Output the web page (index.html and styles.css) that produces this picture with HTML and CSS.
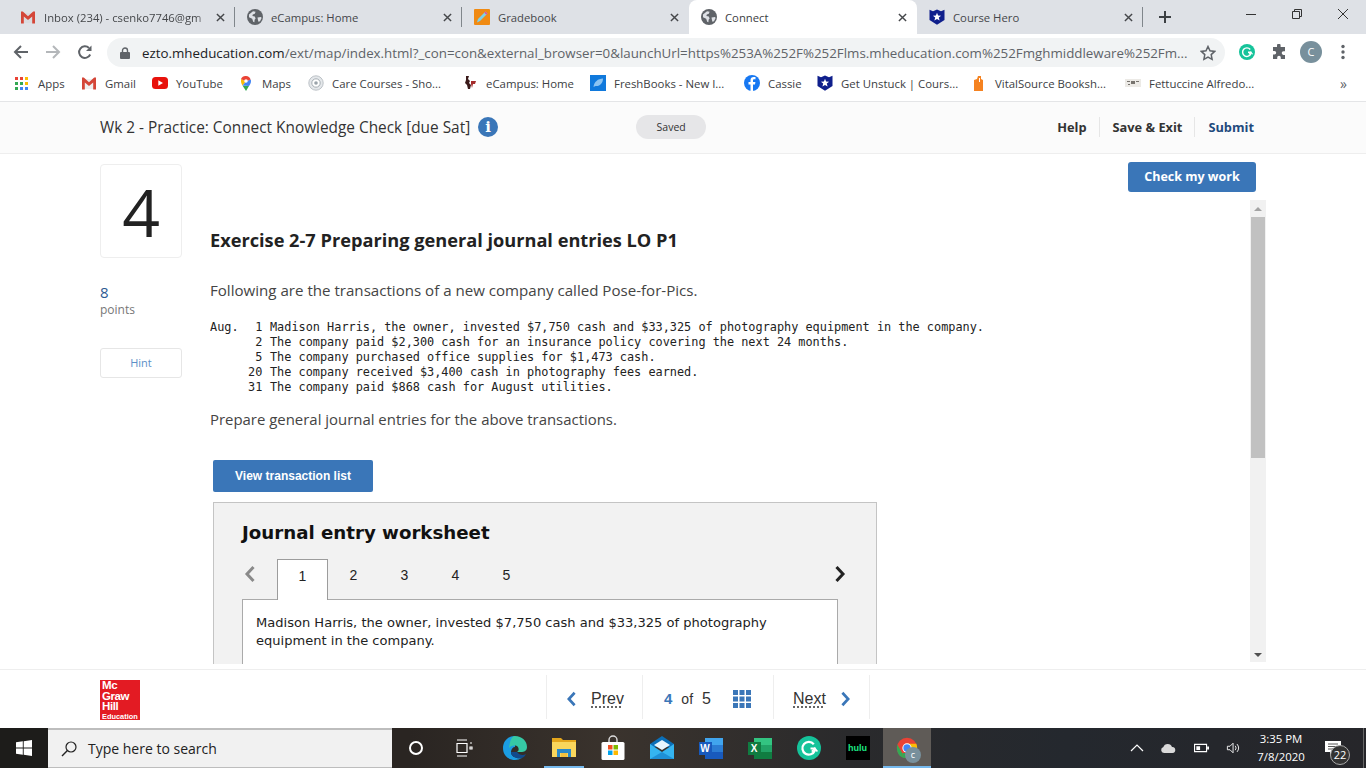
FILE: index.html
```html
<!DOCTYPE html>
<html lang="en">
<head>
<meta charset="utf-8">
<title>Connect</title>
<link rel="stylesheet" href="styles.css">
</head>
<body>
<svg class="defs" aria-hidden="true">
  <symbol id="globe" viewBox="0 0 16 16"><circle cx="8" cy="8" r="8" fill="#5f6368"/><path fill="#dee1e6" d="M2 5.500 6 2.200l2.600.6-.8 2-2 .6-.4 1.600 2.400.6.8 1.800-1 1.400-.2 2.400-1.200-.4-1-3L2 8.200zM10.500 8.500l3.500-.5.600 1-1.600 3.200-1.600.6-.6-2.600z"/></symbol>
  <symbol id="gmail" viewBox="0 0 16 16"><path fill="#d2d2d2" d="M3 4h10v10H3z" opacity=".35"/><path fill="#d44638" d="M1 2.500h1.800L8 7.300l5.200-4.800H15V14.500h-2.800V7.400L8 11 3.800 7.400v7.100H1z"/></symbol>
  <symbol id="hero" viewBox="0 0 16 16"><path fill="#0f1f8c" d="M.5 .8 4 2.200 8 .5l4 1.700L15.500 .8V11L8 15.800 .5 11z"/><path fill="#fff" d="m8 3.800 1.100 2.800 3 .1-2.300 1.900.8 2.900L8 9.900l-2.600 1.600.8-2.900-2.300-1.900 3-.1z"/></symbol>
  <symbol id="close" viewBox="0 0 10 10"><path d="m1 1 8 8M9 1 1 9" fill="none" stroke="#45474a" stroke-width="1.600"/></symbol>
  <symbol id="chev-l" viewBox="0 0 12 18"><path d="M9.500 2 3 9l6.500 7" fill="none" stroke="currentColor" stroke-width="3"/></symbol>
  <symbol id="chev-r" viewBox="0 0 12 18"><path d="M2.500 2 9 9l-6.500 7" fill="none" stroke="currentColor" stroke-width="3"/></symbol>
  <symbol id="grammarly" viewBox="0 0 24 24"><circle cx="12" cy="12" r="12" fill="#15c39a"/><path d="M16.800 8.200A6.400 6.400 0 1 0 17.800 14.500l-.3-2h-4" fill="none" stroke="#fff" stroke-width="2.200"/><path d="m14.800 15.600 3-3.400 2.600 3.200" fill="none" stroke="#fff" stroke-width="1.600"/></symbol>
</svg>

<div class="tabstrip">
  <div class="tab sep">
    <svg class="ico16"><use href="#gmail"/></svg>
    <span class="tab-title fade">Inbox (234) - csenko7746@gm</span>
    <svg class="tab-x"><use href="#close"/></svg>
  </div>
  <div class="tab sep">
    <svg class="ico16"><use href="#globe"/></svg>
    <span class="tab-title">eCampus: Home</span>
    <svg class="tab-x"><use href="#close"/></svg>
  </div>
  <div class="tab">
    <svg class="ico16" viewBox="0 0 16 16"><rect width="16" height="16" rx="1" fill="#f08a12"/><path d="M3 13.500 4 10l7.500-7.500 2 2L6 12z" fill="#7fd0e8"/><path d="m11.500 2.500 2 2-1.200 1.200-2-2z" fill="#e0559c"/></svg>
    <span class="tab-title">Gradebook</span>
    <svg class="tab-x"><use href="#close"/></svg>
  </div>
  <div class="tab tab-active">
    <svg class="ico16"><use href="#globe"/></svg>
    <span class="tab-title">Connect</span>
    <svg class="tab-x"><use href="#close"/></svg>
  </div>
  <div class="tab tab-last sep">
    <svg class="ico16"><use href="#hero"/></svg>
    <span class="tab-title">Course Hero</span>
    <svg class="tab-x"><use href="#close"/></svg>
  </div>
  <svg class="newtab" viewBox="0 0 12 12"><path d="M6 0v12M0 6h12" fill="none" stroke="#3c4043" stroke-width="2"/></svg>
  <div class="winctl">
    <svg class="winbtn" viewBox="0 0 12 12"><path d="M1 6.500h10" stroke="#333" fill="none"/></svg>
    <svg class="winbtn" viewBox="0 0 12 12"><path d="M1.500 3.500h7v7h-7zM3.500 3.500v-2h7v7h-2" stroke="#333" fill="none"/></svg>
    <svg class="winbtn" viewBox="0 0 12 12"><path d="m1 1 10 10M11 1 1 11" stroke="#333" fill="none"/></svg>
  </div>
</div>

<div class="toolbar">
  <svg class="tool" viewBox="0 0 16 16"><path d="M15 8H2M8 2 2 8l6 6" fill="none" stroke="#5f6368" stroke-width="2"/></svg>
  <svg class="tool" viewBox="0 0 16 16"><path d="M1 8h13M8 2l6 6-6 6" fill="none" stroke="#b4b7ba" stroke-width="2"/></svg>
  <svg class="tool" viewBox="0 0 16 16"><path d="M13.200 10.500A5.800 5.800 0 1 1 12 4" fill="none" stroke="#5f6368" stroke-width="2"/><path d="M14.500 1.500v5.500H9z" fill="#5f6368"/></svg>
  <div class="omnibox">
    <svg class="lock" viewBox="0 0 10 12"><path d="M2.500 5V3.500a2.500 2.500 0 0 1 5 0V5" fill="none" stroke="#5f6368" stroke-width="1.400"/><rect y="5" width="10" height="7" rx="1" fill="#5f6368"/></svg>
    <span class="url"><b>ezto.mheducation.com</b>/ext/map/index.html?_con=con&amp;external_browser=0&amp;launchUrl=https%253A%252F%252Flms.mheducation.com%252Fmghmiddleware%252Fm...</span>
    <svg class="star" viewBox="0 0 16 16"><path d="m8 1.500 2 4.300 4.700.6-3.500 3.200.9 4.700L8 12l-4.100 2.300.9-4.700L1.300 6.400 6 5.800z" fill="none" stroke="#5f6368" stroke-width="1.500"/></svg>
  </div>
  <div class="ext">
    <svg class="ico16"><use href="#grammarly"/></svg>
    <svg class="puzzle" viewBox="0 0 16 16"><path fill="#5f6368" d="M6 1.500a1.800 1.800 0 0 1 3.600 0V3H14v4.300h-1.500a1.800 1.800 0 0 0 0 3.600H14V15H9.800v-1.500a1.800 1.800 0 0 0-3.600 0V15H2v-4.400h1.400a1.800 1.800 0 0 0 0-3.600H2V3h4z"/></svg>
    <span class="avatar">C</span>
    <svg class="kebab" viewBox="0 0 4 16"><circle cx="2" cy="2.500" r="1.700" fill="#5f6368"/><circle cx="2" cy="8" r="1.700" fill="#5f6368"/><circle cx="2" cy="13.500" r="1.700" fill="#5f6368"/></svg>
  </div>
</div>

<div class="bookmarks">
  <div class="bm"><svg class="ico14" viewBox="0 0 13 13"><path fill="#ea4335" d="M0 0h3v3H0zM5 0h3v3H5z"/><path fill="#fbbc05" d="M10 0h3v3h-3zM10 5h3v3h-3z"/><path fill="#34a853" d="M0 5h3v3H0zM5 5h3v3H5zM0 10h3v3H0z"/><path fill="#4285f4" d="M5 10h3v3H5zM10 10h3v3h-3z"/></svg><span>Apps</span></div>
  <div class="bm"><svg class="ico16"><use href="#gmail"/></svg><span>Gmail</span></div>
  <div class="bm"><svg class="ico16" viewBox="0 0 16 16"><rect y="2" width="16" height="12" rx="3.500" fill="#e8120c"/><path d="m6.300 5.200 4.700 2.800-4.700 2.800z" fill="#fff"/></svg><span>YouTube</span></div>
  <div class="bm"><svg class="ico16" viewBox="0 0 16 16"><path fill="#34a853" d="M4.500 10.500 8 16l3-5z"/><path fill="#fbbc05" d="M3 4v2.500c0 1.500 1 3 1.500 4L8 6.500z"/><path fill="#4285f4" d="M8 6.500 4.500 10.500 11 11c1-1.500 2-3 2-4.800 0-.7-.1-1.200-.4-1.700z"/><path fill="#ea4335" d="M3 4 8 6.500l4.600-2A5 5 0 0 0 8 1a5 5 0 0 0-5 3z"/><circle cx="8" cy="6" r="1.800" fill="#fff"/></svg><span>Maps</span></div>
  <div class="bm"><svg class="ico16" viewBox="0 0 16 16"><circle cx="8" cy="8" r="7.200" fill="#e4e7ea" stroke="#bcc2c7"/><circle cx="8" cy="8" r="4.200" fill="#fff" stroke="#a5adb3"/><circle cx="8" cy="8" r="1.800" fill="#9aa3aa"/></svg><span>Care Courses - Sho...</span></div>
  <div class="bm"><svg class="ico16" viewBox="0 0 16 16"><path fill="#3a1a1a" d="M4 1h3l-1 3 2 2-1 2 2 2-1 4H6L5 10 3 8l1-3z"/><path fill="#a42b2b" d="M9 6h5l-1 3h-2l-1 4-1-4z"/></svg><span>eCampus: Home</span></div>
  <div class="bm"><svg class="ico16" viewBox="0 0 16 16"><rect width="16" height="16" fill="#1079dc"/><path d="M3.500 12C4 7 8 3.500 13 3.500c0 4.500-3 8-7.500 7.500z" fill="#8cc4f2"/></svg><span>FreshBooks - New I...</span></div>
  <div class="bm"><svg class="ico16" viewBox="0 0 16 16"><circle cx="8" cy="8" r="8" fill="#1778f2"/><path d="M9 16V9.500h2l.4-2.500H9V5.500c0-.8.3-1.300 1.300-1.300h1.200V2.100C11 2 10.300 2 9.700 2 7.700 2 6.500 3.200 6.500 5.200V7h-2v2.500h2V16z" fill="#fff"/></svg><span>Cassie</span></div>
  <div class="bm"><svg class="ico16"><use href="#hero"/></svg><span>Get Unstuck | Cours...</span></div>
  <div class="bm"><svg class="ico16" viewBox="0 0 16 16"><path fill="#f58220" d="M3 5 6 4l1-3h3v3l2 1v11H3z"/><path fill="#fff" d="M8 3h1v4H8z"/></svg><span>VitalSource Booksh...</span></div>
  <div class="bm"><svg class="ico16" viewBox="0 0 16 16"><rect y="4" width="16" height="8" fill="#eceae6"/><path fill="#77736e" d="M2 6h3v1H2zM6 6h4v3H6zM11 6h3v1h-3zM3 9h2v1H3z"/></svg><span>Fettuccine Alfredo...</span></div>
  <div class="bm-more">»</div>
</div>

<header class="quiz-head">
  <div class="quiz-title">Wk 2 - Practice: Connect Knowledge Check [due Sat]</div>
  <span class="info">i</span>
  <span class="saved">Saved</span>
  <nav class="quiz-links">
    <span class="qlink">Help</span>
    <span class="qlink">Save &amp; Exit</span>
    <span class="qlink qlink-blue">Submit</span>
  </nav>
</header>

<main class="main">
  <aside class="side">
    <div class="qnum">4</div>
    <div class="pts">8</div>
    <div class="pts-label">points</div>
    <div class="hint">Hint</div>
  </aside>
  <section class="work">
    <div class="actions"><span class="btn-check">Check my work</span></div>
    <div class="pane">
      <div class="scroll">
        <h1 class="ex-title">Exercise 2-7 Preparing general journal entries LO P1</h1>
        <p class="body-text first">Following are the transactions of a new company called Pose-for-Pics.</p>
        <div class="ledger">
          <span>Aug.</span><span class="led-day">1</span><span>Madison Harris, the owner, invested $7,750 cash and $33,325 of photography equipment in the company.</span>
          <span></span><span class="led-day">2</span><span>The company paid $2,300 cash for an insurance policy covering the next 24 months.</span>
          <span></span><span class="led-day">5</span><span>The company purchased office supplies for $1,473 cash.</span>
          <span></span><span class="led-day">20</span><span>The company received $3,400 cash in photography fees earned.</span>
          <span></span><span class="led-day">31</span><span>The company paid $868 cash for August utilities.</span>
        </div>
        <p class="body-text second">Prepare general journal entries for the above transactions.</p>
        <span class="btn-view">View transaction list</span>
        <div class="worksheet">
          <h2 class="ws-title">Journal entry worksheet</h2>
          <div class="ws-tabs">
            <svg class="ws-prev"><use href="#chev-l"/></svg>
            <span class="ws-tab ws-tab-on">1</span>
            <span class="ws-tab">2</span>
            <span class="ws-tab">3</span>
            <span class="ws-tab">4</span>
            <span class="ws-tab">5</span>
            <svg class="ws-next"><use href="#chev-r"/></svg>
          </div>
          <div class="ws-body">Madison Harris, the owner, invested $7,750 cash and $33,325 of photography equipment in the company.</div>
        </div>
      </div>
      <div class="scrollbar">
        <span class="arrow-up"></span>
        <span class="thumb"></span>
        <span class="track"></span>
        <span class="arrow-down"></span>
      </div>
    </div>
  </section>
</main>

<footer class="foot">
  <div class="logo"><span>Mc</span><span>Graw</span><span>Hill</span><span class="logo-ed">Education</span></div>
  <nav class="pager">
    <div class="pg pg-prev"><svg class="pg-chev"><use href="#chev-l"/></svg><span class="pg-link">Prev</span></div>
    <div class="pg pg-mid">
      <b class="pg-cur">4</b><span class="pg-of">of</span><span class="pg-tot">5</span>
      <svg class="pg-grid" viewBox="0 0 18 18"><path fill="#3a76b8" d="M0 0h5v5H0zM6.500 0h5v5h-5zM13 0h5v5h-5zM0 6.500h5v5H0zM6.500 6.500h5v5h-5zM13 6.500h5v5h-5zM0 13h5v5H0zM6.500 13h5v5h-5zM13 13h5v5h-5z"/></svg>
    </div>
    <div class="pg pg-next"><span class="pg-link">Next</span><svg class="pg-chev"><use href="#chev-r"/></svg></div>
  </nav>
</footer>

<div class="taskbar">
  <div class="start"><svg class="winlogo" viewBox="0 0 16 16"><path fill="#fff" d="M0 2.300 6.800 1.300V7.500H0zM7.700 1.200 16 0v7.500H7.700zM0 8.400h6.800v6.300L0 13.700zM7.700 8.400H16V16l-8.300-1.200z"/></svg></div>
  <div class="search">
    <svg class="search-ico" viewBox="0 0 16 16"><circle cx="10" cy="6" r="5" fill="none" stroke="#222" stroke-width="1.200"/><path d="M6.400 9.600 1 15" stroke="#222" stroke-width="1.400"/></svg>
    <span>Type here to search</span>
  </div>
  <div class="cell cell-a"><span class="cortana"></span></div>
  <div class="cell cell-b"><svg class="ico20" viewBox="0 0 20 20"><path d="M3 2h10M3 18h10M3 5.500h10v9H3zM16 5h2M16 9h2v2h-2z" fill="none" stroke="#fff" stroke-width="1.200"/></svg></div>
  <div class="cell"><svg class="ico26" viewBox="0 0 26 26"><path fill="#1b9de2" d="M13 1C5 1 1 7 1 13c0 8 6 12 12 12 2.500 0 5-.7 7-2-5 1-11-1-11-6 0-3 2-5 4-5z"/><path fill="#36c9a5" d="M13 1c7 0 12 5 12 11 0 4-3 5-6 5h-4c2-1 2-3 1-5-2-2-6-2-9 1C8 7 9 1 13 1z"/><path fill="#114a8b" d="M9 17c0 5 6 7 11 6 2-1 3-2 4-4-3 2-7 1-9-2z"/></svg></div>
  <div class="cell cell-open"><svg class="ico26" viewBox="0 0 26 26"><path fill="#e4a61c" d="M1 3h9l2 2h13v4H1z"/><path fill="#f9d65c" d="M1 7h24v15H1z"/><path fill="#2a89c9" d="M6 14h14v8h-3v-4H9v4H6z"/><path fill="#f3c13f" d="M10 18h6v4h-6z"/></svg></div>
  <div class="cell"><svg class="ico26" viewBox="0 0 26 26"><path d="M9 7V5a4 4 0 0 1 8 0v2" fill="none" stroke="#ddd" stroke-width="1.400"/><rect x="1.500" y="7" width="23" height="18" rx="1.500" fill="#fff"/><path fill="#f25022" d="M8 10h4.500v4.500H8z"/><path fill="#7fba00" d="M13.500 10H18v4.500h-4.500z"/><path fill="#00a4ef" d="M8 15.500h4.500V20H8z"/><path fill="#ffb900" d="M13.500 15.500H18V20h-4.500z"/></svg></div>
  <div class="cell"><svg class="ico26" viewBox="0 0 26 26"><path fill="#0b6fb8" d="M1 9 13 1l12 8v3H1z"/><path fill="#e8f6fd" d="m5 10 8-5 8 5-8 5z"/><path fill="#35b4f0" d="m1 9 12 8 12-8v15H1z"/><path fill="#1e8fd6" d="M1 24 13 17l12 7z"/></svg></div>
  <div class="cell"><span class="office word"><span class="office-l word-l">W</span></span></div>
  <div class="cell"><span class="office excel"><span class="office-l excel-l">X</span></span></div>
  <div class="cell"><svg class="ico24"><use href="#grammarly"/></svg></div>
  <div class="cell"><span class="hulu">hulu</span></div>
  <div class="cell cell-chrome">
    <svg class="chrome" viewBox="0 0 26 26"><circle cx="13" cy="13" r="12" fill="#e94235"/><path fill="#34a853" d="M1.500 9 8 20l-1 4C3 22 1 18 1 13z"/><path fill="#34a853" d="M8 19h6l-3 6c-2 0-3-.5-4-1z"/><path fill="#fbbc05" d="M13 8h11c.7 2 1 3 1 5 0 6-5 12-12 12l6-11z"/><circle cx="13" cy="13" r="5.500" fill="#fff"/><circle cx="13" cy="13" r="4.300" fill="#4285f4"/></svg>
    <span class="chrome-badge">c</span>
  </div>
  <div class="tray">
    <svg class="tray-ico t-up" viewBox="0 0 14 14"><path d="m1 10 6-6 6 6" fill="none" stroke="#fff" stroke-width="1.200"/></svg>
    <svg class="tray-ico cloud" viewBox="0 0 16 14"><path fill="#d9d9d9" d="M4 12a3 3 0 0 1-.6-5.900A4.500 4.500 0 0 1 12 6a3 3 0 0 1 .5 6z"/></svg>
    <svg class="tray-ico batt" viewBox="0 0 16 12"><path d="M.6 2.100h12.800v7.800H.6z" fill="none" stroke="#fff" stroke-width="1.200"/><path fill="#fff" d="M2.500 4h4v4h-4zM14 4.500h2v3h-2z"/></svg>
    <svg class="tray-ico vol" viewBox="0 0 16 16"><path d="M1 6h3l3.500-3.500v11L4 10H1z" fill="none" stroke="#fff"/><path d="M10 5.500a4 4 0 0 1 0 5M12 3.500a7 7 0 0 1 0 9" fill="none" stroke="#fff"/></svg>
    <div class="clock"><span>3:35 PM</span><span>7/8/2020</span></div>
    <div class="notify">
      <svg class="note" viewBox="0 0 16 14"><path fill="#fff" d="M0 0h16v11h-8l-3 3v-3H0z"/><path d="M3 3h10M3 5.500h10M3 8h10" stroke="#444" stroke-width=".9"/></svg>
      <span class="badge">22</span>
    </div>
    <span class="show-desktop"></span>
  </div>
</div>
</body>
</html>
```
FILE: styles.css
```css
* { box-sizing: border-box; }
html, body { margin: 0; height: 768px; overflow: hidden; }
body { display: flex; flex-direction: column; width: 1366px; background: #fff; font-family: "Open Sans", "Liberation Sans", sans-serif; color: #333; }
.defs { display: none; }
svg { flex: none; display: block; }
.ico16 { width: 16px; height: 16px; }
.ico14 { width: 13px; height: 13px; margin: 0 2px 0 0; }
.ico20 { width: 20px; height: 20px; }
.ico24 { width: 24px; height: 24px; }
.ico26 { width: 26px; height: 26px; }

/* tab strip */
.tabstrip { display: flex; align-items: center; height: 34px; padding-left: 8px; background: #dee1e6; flex: none; }
.tab { display: flex; align-items: center; width: 227px; height: 34px; padding: 0 9px 0 12px; font-size: 11.300px; color: #45474a; }
.tab.sep { background: linear-gradient(#80868b,#80868b) right center / 1px 20px no-repeat; }
.tab-active { background: #fff; border-radius: 8px 8px 0 0; color: #3c4043; width: 228px; }
.tab-last { width: 226px; }
.tab-title { flex: 1; margin-left: 8px; white-space: nowrap; }
.fade { -webkit-mask-image: linear-gradient(90deg, #000 88%, transparent 98%); mask-image: linear-gradient(90deg, #000 88%, transparent 98%); }
.tab-x { width: 9px; height: 9px; margin-right: 1px; }
.newtab { width: 12px; height: 12px; margin-left: 16px; }
.winctl { display: flex; margin-left: auto; padding-right: 17px; gap: 34px; }
.winbtn { width: 12px; height: 12px; margin-bottom: 6px; }

/* toolbar */
.toolbar { display: flex; align-items: center; height: 35px; padding-left: 13px; flex: none; background: #fff; }
.tool { width: 16px; height: 16px; margin-right: 16px; }
.tool:nth-child(3) { margin-right: 14px; }
.omnibox { display: flex; align-items: center; width: 1118px; height: 29px; margin-top: 2px; padding: 0 9px 0 13px; background: #f1f3f4; border-radius: 15px; }
.lock { width: 10px; height: 12px; }
.url { flex: 1; margin-left: 12px; font-size: 13.330px; color: #5f6368; white-space: nowrap; overflow: hidden; }
.url b { font-weight: 400; color: #202124; }
.star { width: 16px; height: 16px; }
.ext { display: flex; align-items: center; margin-left: 14px; }
.puzzle { width: 16px; height: 16px; margin-left: 16px; }
.avatar { width: 22px; height: 22px; margin-left: 13px; border-radius: 50%; background: #78909c; color: #fff; font-size: 11px; line-height: 22px; text-align: center; }
.kebab { width: 4px; height: 16px; margin-left: 19px; }

/* bookmarks */
.bookmarks { display: grid; grid-template-columns: 66px 71px 86px 70px 154px 128px 154px 73px 154px 154px 205px 1fr; align-items: center; height: 33px; padding: 0 0 4px 15px; flex: none; border-bottom: 1px solid #e4e5e7; font-size: 11.400px; color: #3c4043; }
.bm { display: flex; align-items: center; gap: 8px; white-space: nowrap; overflow: hidden; }
.bm-more { justify-self: end; padding-right: 19px; font-size: 14px; color: #5f6368; }

/* quiz header */
.quiz-head { display: flex; align-items: center; height: 52px; padding: 0 112px 2px 100px; background: #fbfbfb; border-bottom: 1px solid #eee; flex: none; }
.quiz-title { font-size: 15.380px; line-height: 20px; margin-top: 2px; color: #333; white-space: nowrap; }
.info { width: 20px; height: 20px; margin-left: 8px; border-radius: 50%; background: #3a76b8; color: #fff; font: 700 15px/20px "DejaVu Serif", serif; text-align: center; }
.saved { width: 70px; height: 24px; margin-left: 138px; border-radius: 12px; background: #e6e6e8; font-size: 10.500px; line-height: 24px; text-align: center; }
.quiz-links { display: flex; align-items: center; margin-left: auto; font-size: 12.800px; font-weight: 700; }
.qlink { padding: 0 12px 0 13px; height: 20px; line-height: 20px; white-space: nowrap; border-left: 1px solid #e6e6e6; }
.qlink:first-child { border-left: 0; }
.qlink-blue { color: #1f4a7d; padding-right: 0; }

/* main */
.main { display: flex; gap: 28px; height: 515px; padding: 8px 100px 5px; flex: none; overflow: hidden; }
.side { width: 82px; flex: none; padding-top: 2px; }
.qnum { display: flex; align-items: center; justify-content: center; height: 94px; border: 1px solid #eee; border-radius: 4px; font-size: 66px; font-weight: 500; line-height: 1; color: #222; }
.pts { margin-top: 24px; font-size: 15px; line-height: 20px; color: #2d5a92; }
.pts-label { font-size: 12px; line-height: 16px; color: #777; }
.hint { display: flex; align-items: center; justify-content: center; height: 30px; margin-top: 30px; padding-bottom: 1px; border: 1px solid #e6e6e6; border-radius: 3px; font-size: 11px; color: #5d8fc7; }
.work { flex: 1; display: flex; flex-direction: column; min-width: 0; }
.actions { display: flex; justify-content: flex-end; height: 30px; margin-bottom: 8px; padding-right: 10px; flex: none; }
.btn-check { width: 128px; height: 30px; border-radius: 3px; background: #3a76b8; color: #fff; font-size: 12.500px; font-weight: 700; line-height: 29px; text-align: center; }
.pane { flex: 1; display: flex; min-height: 0; }
.scroll { flex: 1; min-width: 0; overflow: hidden; padding-top: 28px; }
.ex-title { margin: 0; font-size: 18.200px; font-weight: 700; line-height: 24px; color: #222; }
.body-text { margin: 0; font-size: 15.100px; line-height: 20px; color: #444; }
.first { margin-top: 28px; }
.ledger { display: grid; grid-template-columns: 38px 14.300px 1fr; margin: 20px 0 0; font: 11.870px/15px "DejaVu Sans Mono", monospace; color: #222; white-space: nowrap; }
.led-day { text-align: right; }
.ledger span:nth-child(3n) { margin-left: 7.700px; }
.second { margin-top: 14px; font-size: 14.930px; }
.btn-view { display: block; width: 160px; height: 32px; margin: 31px 0 0 3px; border-radius: 2px; background: #3a76b8; color: #fff; font: 700 12px/33px "Liberation Sans", sans-serif; text-align: center; }
.worksheet { width: 664px; height: 240px; margin: 10px 0 0 3px; padding: 0 38px 0 28px; background: #f2f2f2; border: 1px solid #c4c4c4; }
.ws-title { margin: 18px 0 0; font: 700 18.200px/24px "DejaVu Sans", sans-serif; color: #111; }
.ws-tabs { display: flex; align-items: stretch; height: 41px; margin-top: 14px; font: 14px/32px "Liberation Sans", sans-serif; color: #222; }
.ws-prev { width: 12px; height: 18px; margin: 6px 21px 0 2px; color: #8a8a8a; }
.ws-next { width: 12px; height: 18px; margin: 6px -8px 0 auto; color: #222; }
.ws-tab { width: 51px; text-align: center; }
.ws-tab-on { height: 41px; background: #fff; border: 1px solid #9c9c9c; border-bottom: 0; z-index: 1; }
.ws-body { height: 120px; margin-top: -1px; padding: 14px 13px 0; background: #fff; border: 1px solid #aaa; font: 13.050px/18px "DejaVu Sans", sans-serif; color: #222; }
.scrollbar { display: flex; flex-direction: column; align-items: center; width: 16px; height: 462px; background: #f1f1f1; flex: none; }
.arrow-up, .arrow-down { width: 0; height: 4px; border: 4px solid transparent; flex: none; }
.arrow-up { margin: 7px 0 6px; border-top: 0; border-bottom: 4px solid #a3a3a3; }
.arrow-down { margin: 4px 0 5px; border-bottom: 0; border-top: 4px solid #505050; }
.thumb { width: 14px; height: 241px; background: #c1c1c1; flex: none; }
.track { flex: 1; }

/* footer */
.foot { display: flex; align-items: flex-start; height: 59px; padding-left: 100px; background: #fff; border-top: 1px solid #eee; flex: none; }
.logo { display: flex; flex-direction: column; width: 40px; height: 40px; margin-top: 10px; padding: 0 0 0 2px; background: #e31b23; color: #fff; font: 700 11.500px/10.500px "Liberation Sans", sans-serif; letter-spacing: -.4px; }
.logo-ed { font-size: 7.400px; line-height: 9px; letter-spacing: 0; }
.pager { display: flex; height: 44px; margin: 5px 0 0 406px; border-left: 1px solid #eee; font: 16px/20px "Liberation Sans", sans-serif; color: #333; }
.pg { display: flex; align-items: center; padding-top: 4px; border-right: 1px solid #eee; }
.pg-prev { width: 96px; padding-left: 19px; gap: 14px; }
.pg-mid { width: 131px; padding-left: 21px; }
.pg-next { width: 96px; padding-left: 19px; gap: 14px; }
.pg-chev { width: 11px; height: 16px; color: #3a76b8; }
.pg-link { text-decoration: underline dotted; text-underline-offset: 3px; }
.pg-cur { font-size: 15px; color: #3a76b8; }
.pg-of { margin-left: 9px; font-size: 14px; }
.pg-tot { margin-left: 9px; }
.pg-grid { width: 18px; height: 18px; margin-left: 22px; }

/* taskbar */
.taskbar { display: flex; align-items: center; height: 40px; background: linear-gradient(90deg, #2a2522 0 30%, #3a332d 45%, #2a2a2c 62%, #24282e 78%, #26262a); flex: none; }
.start { display: flex; align-items: center; justify-content: center; width: 48px; height: 40px; background: #1d1c1a; flex: none; }
.winlogo { width: 16px; height: 16px; }
.search { display: flex; align-items: center; width: 344px; height: 40px; padding-left: 13px; background: #f1f1f1; border: 1px solid #bdbdbd; border-width: 2px 0 1px; font-size: 14px; color: #222; flex: none; }
.search-ico { width: 16px; height: 16px; margin-right: 11px; }
.cell { display: flex; align-items: center; justify-content: center; width: 49px; height: 40px; flex: none; }
.cell-a { width: 48px; }
.cell-b { width: 50px; padding-right: 3px; }
.cortana { width: 14px; height: 14px; border: 2px solid #fff; border-radius: 50%; }
.cell-open { background: linear-gradient(#76b9ed, #76b9ed) center bottom / 40px 2px no-repeat; }
.office { display: flex; align-items: center; width: 18px; height: 21px; margin-left: 6px; }
.word { background: linear-gradient(#41a5ee 0 33%, #2b7cd3 33% 66%, #185abd 66%); }
.excel { background: linear-gradient(#33c481 0 33%, #21a366 33% 66%, #107c41 66%); }
.office-l { width: 13px; height: 13px; margin-left: -6px; color: #fff; font: 700 10px/13px "Liberation Sans", sans-serif; text-align: center; }
.word-l { background: #185abd; }
.excel-l { background: #107c41; }
.hulu { width: 24px; height: 24px; background: #000; color: #1ce783; font: 700 9px/24px "Liberation Sans", sans-serif; text-align: center; }
.cell-chrome { position: relative; width: 48px; margin-left: 1px; background: #5f5b57; box-shadow: inset 0 -2px 0 #76b9ed; }
.chrome { width: 22px; height: 22px; }
.chrome-badge { position: absolute; left: 22px; top: 19px; width: 16px; height: 16px; border-radius: 50%; background: #78909c; color: #fff; font-size: 9px; line-height: 15px; text-align: center; }
.tray { display: flex; align-items: center; margin-left: auto; height: 40px; }
.tray-ico { width: 14px; height: 14px; }
.t-up { margin-right: 16px; }
.cloud { width: 16px; margin-right: 18px; }
.batt { width: 15px; margin-right: 17px; }
.vol { width: 15px; margin-right: 6px; }
.clock { display: flex; flex-direction: column; align-items: center; width: 68px; font-size: 11.400px; line-height: 18px; color: #fff; }
.notify { position: relative; width: 48px; height: 40px; }
.note { margin: 13px 0 0 10px; width: 16px; height: 14px; }
.badge { position: absolute; left: 15px; top: 17px; width: 20px; height: 20px; border: 1px solid #aaa; border-radius: 50%; background: #333; color: #fff; font-size: 11px; line-height: 18px; text-align: center; }
.show-desktop { width: 3px; height: 40px; border-left: 1px solid #666; }
```
